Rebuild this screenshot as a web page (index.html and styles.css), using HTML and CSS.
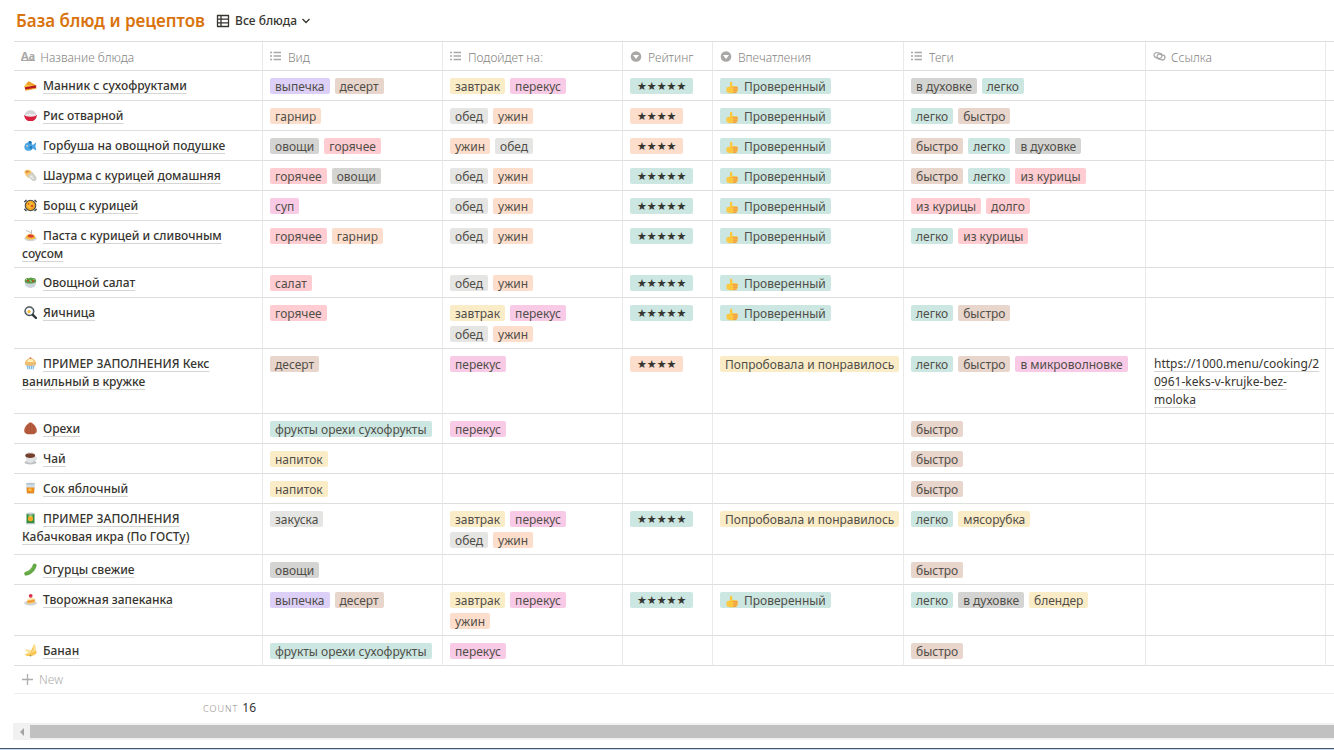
FILE: index.html
```html
<!DOCTYPE html>
<html lang="ru">
<head>
<meta charset="utf-8">
<title>База блюд и рецептов</title>
<link rel="stylesheet" href="styles.css">
</head>
<body>
<svg class="sprite" aria-hidden="true">
  <symbol id="i-list" viewBox="0 0 14 12"><path d="M0 1.500h2M0 5h2M0 8.500h2M3.500 1.500H11M3.500 5H11M3.500 8.500H11" stroke="currentColor" stroke-width="1.300"/></symbol>
  <symbol id="i-select" viewBox="0 0 14 12"><circle cx="6" cy="5.500" r="5.300" fill="currentColor"/><path d="M3 4.100h6L6 7.900z" fill="#fff"/></symbol>
  <symbol id="i-link" viewBox="0 0 14 12"><g fill="none" stroke="currentColor" stroke-width="1.300"><rect x="1" y="2" width="8" height="5" rx="2.500" transform="rotate(14 5 4.500)"/><rect x="4" y="3.600" width="8" height="5" rx="2.500" transform="rotate(14 8 6.100)"/></g></symbol>
  <symbol id="e-pie" viewBox="0 0 13 13"><path d="M0 7.500L4.500 2.300 12.300 6.500.8 8.600z" fill="#fbc43e"/><path d="M2 5.500L4.500 2.300 12.300 6.500l-2 .3z" fill="#eda02c"/><path d="M.6 8.300l11.600-2v3L1.500 11.300z" fill="#b5191d"/><path d="M1 10.600l11.200-1.800v1L1.600 11.800z" fill="#f3a72c"/></symbol>
  <symbol id="e-rice" viewBox="0 0 13 13"><path d="M.6 6.500C.8 3 3.800 1.200 6.500 1.200s5.700 1.800 5.900 5.300z" fill="#d4d4d7"/><path d="M.2 6h12.600c0 3.500-2.500 5.500-4 6H4.200C2.700 11.500.2 9.500.2 6z" fill="#d8213f"/><ellipse cx="6.500" cy="6.300" rx="5.700" ry="1.500" fill="#ebe9eb"/></symbol>
  <symbol id="e-fish" viewBox="0 0 13 13"><path d="M.3 8C.8 4.500 3 3 6 3.800L9 6l2.800-2.600c.8 1-.3 2.600-.4 4 .3 1.300 1.300 2.600.5 4L9 9.500c-1.500 2.200-3.500 2.500-5.500 2.200C1.500 11.200.3 10 .3 8z" fill="#4ba5e3"/><path d="M4.200 3.600C4.500 1.800 6.800 1.500 8 3.500L7 5.500zM5 8l3-1-.5 3.500z" fill="#1976b8"/><circle cx="2.900" cy="7" r="1" fill="#fff"/><circle cx="2.800" cy="7" r=".55" fill="#234"/></symbol>
  <symbol id="e-wrap" viewBox="0 0 13 13"><path d="M.4 2.300C1.500.2 5 .2 7 2l3 3.500-6 3.500C2 7 .2 5 .4 2.300z" fill="#f8c86d"/><path d="M3 7l5.500-4 3.700 5c1.200 2.400-.8 4.500-3.400 4z" fill="#cfcfca"/><path d="M5 7.500l5.500 3.500L8 6z" fill="#e8e8e4"/><circle cx="3" cy="2.800" r="1.200" fill="#d9853d"/><circle cx="5" cy="2.600" r=".9" fill="#e8953c"/></symbol>
  <symbol id="e-pan" viewBox="0 0 13 13"><circle cx="6.500" cy="6.500" r="5.800" fill="#444a50"/><path d="M.3 3L2.500.8M12.700 3L10.500.8M.3 10l2.200 2.200M12.700 10l-2.200 2.200" stroke="#333" stroke-width="1.200"/><circle cx="6.500" cy="6.500" r="4.700" fill="#f0a01f"/><path d="M3 5c2-3 5-2 6 0s1 3-1 4-4 0-5-1z" fill="#f9bd35"/><circle cx="8" cy="7" r="1.300" fill="#d8501f"/><circle cx="4.600" cy="5" r=".9" fill="#d65b25"/></symbol>
  <symbol id="e-pasta" viewBox="0 0 13 13"><path d="M2 1.500l6 2.500M7.500 1v4" stroke="#bdbdbd" stroke-width=".9"/><ellipse cx="6.500" cy="9.500" rx="6.200" ry="2.700" fill="#d4d7d9"/><path d="M1.500 9C2 5.500 4.500 4.500 7 4.700s4.200 1.700 4.500 4.300c-2 2-8 2-10 0z" fill="#f2b947"/><path d="M3.500 7C4.500 4.800 9 4.800 10 7.500c-1 1.600-5.500 1.300-6.500-.5z" fill="#dd3a31"/></symbol>
  <symbol id="e-salad" viewBox="0 0 13 13"><path d="M1 6h11c.5 3.200-1.800 6-5.500 6S.5 9.200 1 6z" fill="#cbd4da"/><path d="M.8 6C0 3 3 1 4.800 2.500c1-1.500 3-1 3.700-.2 2-.8 4 1 3.700 3.500-1 2.200-10 2.500-11.400.2z" fill="#5a9c45"/><circle cx="4" cy="4.800" r="1" fill="#d9442c"/><circle cx="9" cy="5" r=".9" fill="#c93d2b"/><path d="M6 4l1.500 2M2 4l1-1M9.500 3l1 1" stroke="#b5da8a" stroke-width=".9"/></symbol>
  <symbol id="e-egg" viewBox="0 0 13 13"><circle cx="5.400" cy="5.200" r="5" fill="#3b4347"/><circle cx="5.400" cy="5.200" r="4" fill="#83949c"/><path d="M2 5c0-3 3-3.500 5-2.500s2.500 3 1 5S2 8 2 5z" fill="#fff"/><circle cx="5" cy="5.600" r="1.600" fill="#f9b233"/><path d="M8.800 8.800l3.200 3.200" stroke="#30383c" stroke-width="2.400" stroke-linecap="round"/></symbol>
  <symbol id="e-cake" viewBox="0 0 13 13"><path d="M2 7h9l-1.400 5.300H3.400z" fill="#79b5e5"/><path d="M4 7.500l.6 4.500M6.500 7.500V12M9 7.500L8.400 12" stroke="#dbeefa" stroke-width=".9"/><path d="M.8 6.800C1 3.500 4 1 6.500 1S12 3.500 12.200 6.800c-.3 2-2.200 2-3.200 1.400-1.600.9-3.400.9-5 0-1 .6-2.900.6-3.200-1.400z" fill="#eebd71"/><path d="M3 5C3.500 2.500 5.500 1.800 6.500 1.800s2.500.7 3.500 3.200z" fill="#fff0b3"/><circle cx="6.500" cy="1.100" r=".8" fill="#d65348"/></symbol>
  <symbol id="e-nut" viewBox="0 0 13 13"><path d="M6.500.3C9.500 1.500 12.800 5 12.800 8.700c0 2.800-2.500 3.600-6.300 3.600S.2 11.500.2 8.700C.2 5 3.500 1.500 6.500.3z" fill="#b85c3e"/><path d="M6.500 1v11M4.500 3C3 6 3 9 3.500 12M8.500 3c1.500 3 1.500 6 1 9" stroke="#98482e" stroke-width=".5" fill="none"/></symbol>
  <symbol id="e-tea" viewBox="0 0 13 13"><ellipse cx="6.500" cy="10.500" rx="6" ry="1.900" fill="#bdc0c3"/><path d="M1.500 3.500h9.500c.3 4-1.500 7.500-4.800 7.500S1.200 7.500 1.500 3.500z" fill="#e2e4e6"/><path d="M10.500 5c2.500-.6 2.500 3-.8 3.300" fill="none" stroke="#cdd0d2" stroke-width="1.100"/><ellipse cx="6.200" cy="3.600" rx="4.900" ry="2.400" fill="#75402e"/><path d="M4.500 2c-.5-1 .8-1 .3-2M7.500 2c-.5-1 .8-1 .3-2" stroke="#a99" stroke-width=".6" fill="none"/></symbol>
  <symbol id="e-juice" viewBox="0 0 13 13"><path d="M2 1.500h9L10.200 12H2.800z" fill="#d2dfe9"/><path d="M2.500 5.500h8L10 11.300H3z" fill="#ec8b1e"/><path d="M4.500 6.500h3v2.500h-3z" fill="#ffc04b"/><ellipse cx="6.500" cy="1.800" rx="4.500" ry="1" fill="#b5c4ce"/></symbol>
  <symbol id="e-can" viewBox="0 0 13 13"><path d="M2.500 1.500h8v10.300h-8z" fill="#2f8e3f"/><ellipse cx="6.500" cy="1.600" rx="4" ry="1.100" fill="#c6ced2"/><path d="M2.500 11h8v1.300h-8z" fill="#b9c2c5"/><circle cx="6.500" cy="6.700" r="2.600" fill="#f9a825"/><path d="M4.500 4h4" stroke="#c5e08b" stroke-width="1.200"/></symbol>
  <symbol id="e-cucumber" viewBox="0 0 13 13"><path d="M2.200 10.700C6 9.800 9.300 6.500 10.700 2.500" stroke="#62a744" stroke-width="3.800" stroke-linecap="round" fill="none"/><path d="M3 9.500C6 8.300 8 6 9.500 3.500" stroke="#7dbc5b" stroke-width=".9" fill="none"/></symbol>
  <symbol id="e-shortcake" viewBox="0 0 13 13"><ellipse cx="6.500" cy="10" rx="6.300" ry="2.500" fill="#cfd2d4"/><path d="M2.800 6.500L7 4l3.800 1.500v4.200l-7.300 1.100z" fill="#fbeec4"/><path d="M3.200 7.600l7.600-1.500v3.400l-7.200 1.200z" fill="#f6bb46"/><path d="M3.300 9l7.500-1.400" stroke="#ea7b42" stroke-width=".8"/><circle cx="6.700" cy="2.800" r="1.900" fill="#db3249"/></symbol>
  <symbol id="e-banana" viewBox="0 0 13 13"><path d="M9.500.8L11 .4l1 5.600.8 3c-1.500 2.500-5 3-8 3-2 .2-3.200-.6-4-1.500C5 9.500 8.500 6 9.500.8z" fill="#f8c95a"/><path d="M.3 6c3-1.500 5.500-.5 7 1.500L4 10.500C3.500 8 2.300 6.600.3 6zM9.500.8l.3 5L7 9l5-3-1-5.600z" fill="#fde5a0"/><circle cx="6.500" cy="11.700" r=".8" fill="#8e8a35"/></symbol>
  <symbol id="e-thumb" viewBox="0 0 13 13"><path d="M.5 6.500L4 5.500V1.300C4.800.3 6.300.8 6.400 2.200L6.300 5l4.200.2c1.300.2 1.500 1.300 1 2 .8.500.7 1.500 0 2 .4.700 0 1.400-.6 1.600.1.900-.6 1.400-1.600 1.400H4L.5 11z" fill="#fcc83f"/><path d="M6.500 6h4.700c.9.500.7 1.500.2 1.800H7.300M7 8.400h4.200c.7.600.3 1.400-.3 1.600H7.300M7.400 10.500h3.400c0 1-.6 1.600-1.500 1.600H7z" fill="#f0a04b"/></symbol>
</svg>
<header class="bar">
  <h1 class="title">База блюд и рецептов</h1>
  <button class="view" type="button">
    <svg class="view-icon" viewBox="0 0 14 14" aria-hidden="true"><path d="M1.500 1.500h11v11h-11zM1.500 5.200h11M1.500 8.800h11M5 1.500v11" fill="none" stroke="currentColor" stroke-width="1.300" stroke-linejoin="round"/></svg>
    <span>Все блюда</span>
    <svg class="chevron" viewBox="0 0 10 8" aria-hidden="true"><path d="M1.500 2L5 5.500 8.500 2" fill="none" stroke="currentColor" stroke-width="1.300"/></svg>
  </button>
</header>
<main class="board">
<table class="grid">
<colgroup><col class="c-name"><col class="c-mid"><col class="c-mid"><col class="c-rate"><col class="c-mood"><col class="c-tags"><col class="c-mid"><col></colgroup>
<thead><tr>
<th><span class="aa">Aa</span>Название блюда</th>
<th><svg class="hi"><use href="#i-list"/></svg>Вид</th>
<th><svg class="hi"><use href="#i-list"/></svg>Подойдет на:</th>
<th><svg class="hi"><use href="#i-select"/></svg>Рейтинг</th>
<th><svg class="hi"><use href="#i-select"/></svg>Впечатления</th>
<th><svg class="hi"><use href="#i-list"/></svg>Теги</th>
<th><svg class="hi"><use href="#i-link"/></svg>Ссылка</th>
<th></th>
</tr></thead>
<tbody>
<tr><td class="name"><svg class="em"><use href="#e-pie"/></svg><a href="#">Манник с сухофруктами</a></td>
<td><div class="tags"><span class="t purple">выпечка</span><span class="t brown">десерт</span></div></td>
<td><div class="tags"><span class="t yellow">завтрак</span><span class="t pink">перекус</span></div></td>
<td><div class="tags"><span class="t teal star">★★★★★</span></div></td>
<td><div class="tags"><span class="t teal"><svg class="th"><use href="#e-thumb"/></svg>Проверенный</span></div></td>
<td><div class="tags"><span class="t gray">в духовке</span><span class="t teal">легко</span></div></td><td></td><td></td></tr>
<tr><td class="name"><svg class="em"><use href="#e-rice"/></svg><a href="#">Рис отварной</a></td>
<td><div class="tags"><span class="t orange">гарнир</span></div></td>
<td><div class="tags"><span class="t light">обед</span><span class="t orange">ужин</span></div></td>
<td><div class="tags"><span class="t orange star">★★★★</span></div></td>
<td><div class="tags"><span class="t teal"><svg class="th"><use href="#e-thumb"/></svg>Проверенный</span></div></td>
<td><div class="tags"><span class="t teal">легко</span><span class="t brown">быстро</span></div></td><td></td><td></td></tr>
<tr><td class="name"><svg class="em"><use href="#e-fish"/></svg><a href="#">Горбуша на овощной подушке</a></td>
<td><div class="tags"><span class="t gray">овощи</span><span class="t red">горячее</span></div></td>
<td><div class="tags"><span class="t orange">ужин</span><span class="t light">обед</span></div></td>
<td><div class="tags"><span class="t orange star">★★★★</span></div></td>
<td><div class="tags"><span class="t teal"><svg class="th"><use href="#e-thumb"/></svg>Проверенный</span></div></td>
<td><div class="tags"><span class="t brown">быстро</span><span class="t teal">легко</span><span class="t gray">в духовке</span></div></td><td></td><td></td></tr>
<tr><td class="name"><svg class="em"><use href="#e-wrap"/></svg><a href="#">Шаурма с курицей домашняя</a></td>
<td><div class="tags"><span class="t red">горячее</span><span class="t gray">овощи</span></div></td>
<td><div class="tags"><span class="t light">обед</span><span class="t orange">ужин</span></div></td>
<td><div class="tags"><span class="t teal star">★★★★★</span></div></td>
<td><div class="tags"><span class="t teal"><svg class="th"><use href="#e-thumb"/></svg>Проверенный</span></div></td>
<td><div class="tags"><span class="t brown">быстро</span><span class="t teal">легко</span><span class="t red">из курицы</span></div></td><td></td><td></td></tr>
<tr><td class="name"><svg class="em"><use href="#e-pan"/></svg><a href="#">Борщ с курицей</a></td>
<td><div class="tags"><span class="t pink">суп</span></div></td>
<td><div class="tags"><span class="t light">обед</span><span class="t orange">ужин</span></div></td>
<td><div class="tags"><span class="t teal star">★★★★★</span></div></td>
<td><div class="tags"><span class="t teal"><svg class="th"><use href="#e-thumb"/></svg>Проверенный</span></div></td>
<td><div class="tags"><span class="t red">из курицы</span><span class="t red">долго</span></div></td><td></td><td></td></tr>
<tr><td class="name"><svg class="em"><use href="#e-pasta"/></svg><a href="#">Паста с курицей и сливочным соусом</a></td>
<td><div class="tags"><span class="t red">горячее</span><span class="t orange">гарнир</span></div></td>
<td><div class="tags"><span class="t light">обед</span><span class="t orange">ужин</span></div></td>
<td><div class="tags"><span class="t teal star">★★★★★</span></div></td>
<td><div class="tags"><span class="t teal"><svg class="th"><use href="#e-thumb"/></svg>Проверенный</span></div></td>
<td><div class="tags"><span class="t teal">легко</span><span class="t red">из курицы</span></div></td><td></td><td></td></tr>
<tr><td class="name"><svg class="em"><use href="#e-salad"/></svg><a href="#">Овощной салат</a></td>
<td><div class="tags"><span class="t red">салат</span></div></td>
<td><div class="tags"><span class="t light">обед</span><span class="t orange">ужин</span></div></td>
<td><div class="tags"><span class="t teal star">★★★★★</span></div></td>
<td><div class="tags"><span class="t teal"><svg class="th"><use href="#e-thumb"/></svg>Проверенный</span></div></td>
<td></td><td></td><td></td></tr>
<tr><td class="name"><svg class="em"><use href="#e-egg"/></svg><a href="#">Яичница</a></td>
<td><div class="tags"><span class="t red">горячее</span></div></td>
<td><div class="tags"><span class="t yellow">завтрак</span><span class="t pink">перекус</span><span class="t light">обед</span><span class="t orange">ужин</span></div></td>
<td><div class="tags"><span class="t teal star">★★★★★</span></div></td>
<td><div class="tags"><span class="t teal"><svg class="th"><use href="#e-thumb"/></svg>Проверенный</span></div></td>
<td><div class="tags"><span class="t teal">легко</span><span class="t brown">быстро</span></div></td><td></td><td></td></tr>
<tr><td class="name"><svg class="em"><use href="#e-cake"/></svg><a href="#">ПРИМЕР ЗАПОЛНЕНИЯ Кекс ванильный в кружке</a></td>
<td><div class="tags"><span class="t brown">десерт</span></div></td>
<td><div class="tags"><span class="t pink">перекус</span></div></td>
<td><div class="tags"><span class="t orange star">★★★★</span></div></td>
<td><div class="tags"><span class="t yellow">Попробовала и понравилось</span></div></td>
<td><div class="tags"><span class="t teal">легко</span><span class="t brown">быстро</span><span class="t pink">в микроволновке</span></div></td>
<td class="url"><a href="#">https://1000.menu/cooking/20961-keks-v-krujke-bez-moloka</a></td><td></td></tr>
<tr><td class="name"><svg class="em"><use href="#e-nut"/></svg><a href="#">Орехи</a></td>
<td><div class="tags"><span class="t teal">фрукты орехи сухофрукты</span></div></td>
<td><div class="tags"><span class="t pink">перекус</span></div></td><td></td><td></td>
<td><div class="tags"><span class="t brown">быстро</span></div></td><td></td><td></td></tr>
<tr><td class="name"><svg class="em"><use href="#e-tea"/></svg><a href="#">Чай</a></td>
<td><div class="tags"><span class="t yellow">напиток</span></div></td><td></td><td></td><td></td>
<td><div class="tags"><span class="t brown">быстро</span></div></td><td></td><td></td></tr>
<tr><td class="name"><svg class="em"><use href="#e-juice"/></svg><a href="#">Сок яблочный</a></td>
<td><div class="tags"><span class="t yellow">напиток</span></div></td><td></td><td></td><td></td>
<td><div class="tags"><span class="t brown">быстро</span></div></td><td></td><td></td></tr>
<tr><td class="name"><svg class="em"><use href="#e-can"/></svg><a href="#">ПРИМЕР ЗАПОЛНЕНИЯ Кабачковая икра (По ГОСТу)</a></td>
<td><div class="tags"><span class="t light">закуска</span></div></td>
<td><div class="tags"><span class="t yellow">завтрак</span><span class="t pink">перекус</span><span class="t light">обед</span><span class="t orange">ужин</span></div></td>
<td><div class="tags"><span class="t teal star">★★★★★</span></div></td>
<td><div class="tags"><span class="t yellow">Попробовала и понравилось</span></div></td>
<td><div class="tags"><span class="t teal">легко</span><span class="t yellow">мясорубка</span></div></td><td></td><td></td></tr>
<tr><td class="name"><svg class="em"><use href="#e-cucumber"/></svg><a href="#">Огурцы свежие</a></td>
<td><div class="tags"><span class="t gray">овощи</span></div></td><td></td><td></td><td></td>
<td><div class="tags"><span class="t brown">быстро</span></div></td><td></td><td></td></tr>
<tr><td class="name"><svg class="em"><use href="#e-shortcake"/></svg><a href="#">Творожная запеканка</a></td>
<td><div class="tags"><span class="t purple">выпечка</span><span class="t brown">десерт</span></div></td>
<td><div class="tags"><span class="t yellow">завтрак</span><span class="t pink">перекус</span><span class="t orange">ужин</span></div></td>
<td><div class="tags"><span class="t teal star">★★★★★</span></div></td>
<td><div class="tags"><span class="t teal"><svg class="th"><use href="#e-thumb"/></svg>Проверенный</span></div></td>
<td><div class="tags"><span class="t teal">легко</span><span class="t gray">в духовке</span><span class="t yellow">блендер</span></div></td><td></td><td></td></tr>
<tr><td class="name"><svg class="em"><use href="#e-banana"/></svg><a href="#">Банан</a></td>
<td><div class="tags"><span class="t teal">фрукты орехи сухофрукты</span></div></td>
<td><div class="tags"><span class="t pink">перекус</span></div></td><td></td><td></td>
<td><div class="tags"><span class="t brown">быстро</span></div></td><td></td><td></td></tr>
</tbody>
</table>
<button class="new" type="button"><svg class="plus" viewBox="0 0 11 11" aria-hidden="true"><path d="M5.500 0v11M0 5.500h11" stroke="currentColor" stroke-width="1.300"/></svg>New</button>
<div class="count"><span class="count-label">COUNT</span><span>16</span></div>
</main>
<div class="scroll"><button class="scroll-left" type="button" aria-label="Влево"><svg viewBox="0 0 4 8" aria-hidden="true"><path d="M4 0v8L0 4z" fill="currentColor"/></svg></button><div class="thumb"></div></div>
<footer class="edge"></footer>
</body>
</html>
```
FILE: styles.css
```css
* { box-sizing: border-box; }
body {
  margin: 0;
  min-height: 100vh;
  display: flex;
  flex-direction: column;
  overflow: hidden;
  background: #fff;
  color: #37352f;
  font-family: "Noto Sans", "Open Sans", sans-serif;
  font-size: 12px;
  line-height: 18px;
}
.sprite { position: absolute; width: 0; height: 0; }
button {
  border: 0;
  padding: 0;
  background: none;
  color: inherit;
  font: inherit;
}
a { color: inherit; text-decoration: none; }

.bar { display: flex; align-items: center; gap: 11px; height: 41px; padding-left: 16px; }
.title { margin: 0; color: #d9730d; font-size: 17px; font-weight: 600; line-height: 24px; }
.view { display: flex; align-items: center; font-weight: 500; }
.view-icon { width: 14px; height: 14px; margin-right: 5px; }
.chevron { width: 10px; height: 8px; margin-left: 4px; }

.board { padding-left: 14px; }
.grid {
  width: 100%;
  table-layout: fixed;
  border-spacing: 0;
  border-top: 1px solid #dededd;
}
.c-name { width: 249px; }
.c-mid { width: 180px; }
.c-rate { width: 90px; }
.c-mood { width: 191px; }
.c-tags { width: 242px; }
th, td {
  padding: 7px 14px 6px 7px;
  vertical-align: top;
  text-align: left;
  border-right: 1px solid #e9e9e8;
  border-bottom: 1px solid #dededd;
}
th:last-child, td:last-child { border-right: 0; }
th {
  padding: 7px 7px 3px;
  color: #85847f;
  font-weight: 300;
  line-height: 18px;
  white-space: nowrap;
}
.hi { width: 14px; height: 12px; margin-right: 4px; color: #a9a8a6; vertical-align: -1px; }
.aa {
  display: inline-block;
  margin-right: 5px;
  border-bottom: 1px solid #a9a8a6;
  color: #a9a8a6;
  font-size: 11px;
  font-weight: 700;
  line-height: 9px;
  vertical-align: 2px;
}
.name { padding: 6px 14px 4px 8px; }
.url { padding: 6px 4px 4px 8px; }
.em { width: 13px; height: 13px; margin: 0 6px 0 2px; vertical-align: -2px; }
.name a, .url a {
  text-decoration: underline 1px #d6d5d3;
  text-decoration-skip-ink: none;
  text-underline-offset: 3px;
}
.name a { font-weight: 500; }
.url { word-break: break-word; }

.tags { display: flex; flex-wrap: wrap; gap: 5px; }
.t {
  height: 16px;
  padding: 0 5px;
  border-radius: 2px;
  color: #504e48;
  line-height: 18px;
  white-space: nowrap;
}
.star { padding: 0 7px; color: #37352f; font-family: "DejaVu Sans", sans-serif; font-size: 11px; }
.th { width: 13px; height: 13px; margin: 0 5px 0 1px; vertical-align: -3px; }
.purple { background: #ddd0f8; }
.brown { background: #e8d5cc; }
.yellow { background: #fbecc8; }
.pink { background: #f8cae6; }
.teal { background: #cce7e1; }
.light { background: #e5e5e3; }
.gray { background: #d4d4d2; }
.orange { background: #fddecc; }
.red { background: #ffccd1; }

.new {
  display: flex;
  align-items: center;
  width: 100%;
  height: 28px;
  padding-left: 8px;
  border-bottom: 1px solid #ededec;
  color: #adacaa;
  font-weight: 300;
}
.plus { width: 11px; height: 11px; margin-right: 6px; }
.count {
  display: flex;
  justify-content: flex-end;
  align-items: baseline;
  gap: 4px;
  width: 249px;
  padding: 5px 7px;
}
.count-label { color: #8f8e8b; font-size: 9px; font-weight: 300; letter-spacing: 1px; }
.scroll { display: flex; align-items: center; height: 17px; margin-left: 13px; background: #f1f1f1; }
.scroll-left { display: flex; justify-content: center; align-items: center; width: 17px; color: #a3a3a3; }
.scroll-left svg { width: 4px; height: 8px; }
.thumb { flex: 1; height: 13px; background: #c1c1c1; }
.edge { height: 2px; margin-top: auto; border-top: 1px solid #4a5a6c; background: #c5d6ea; }
```
